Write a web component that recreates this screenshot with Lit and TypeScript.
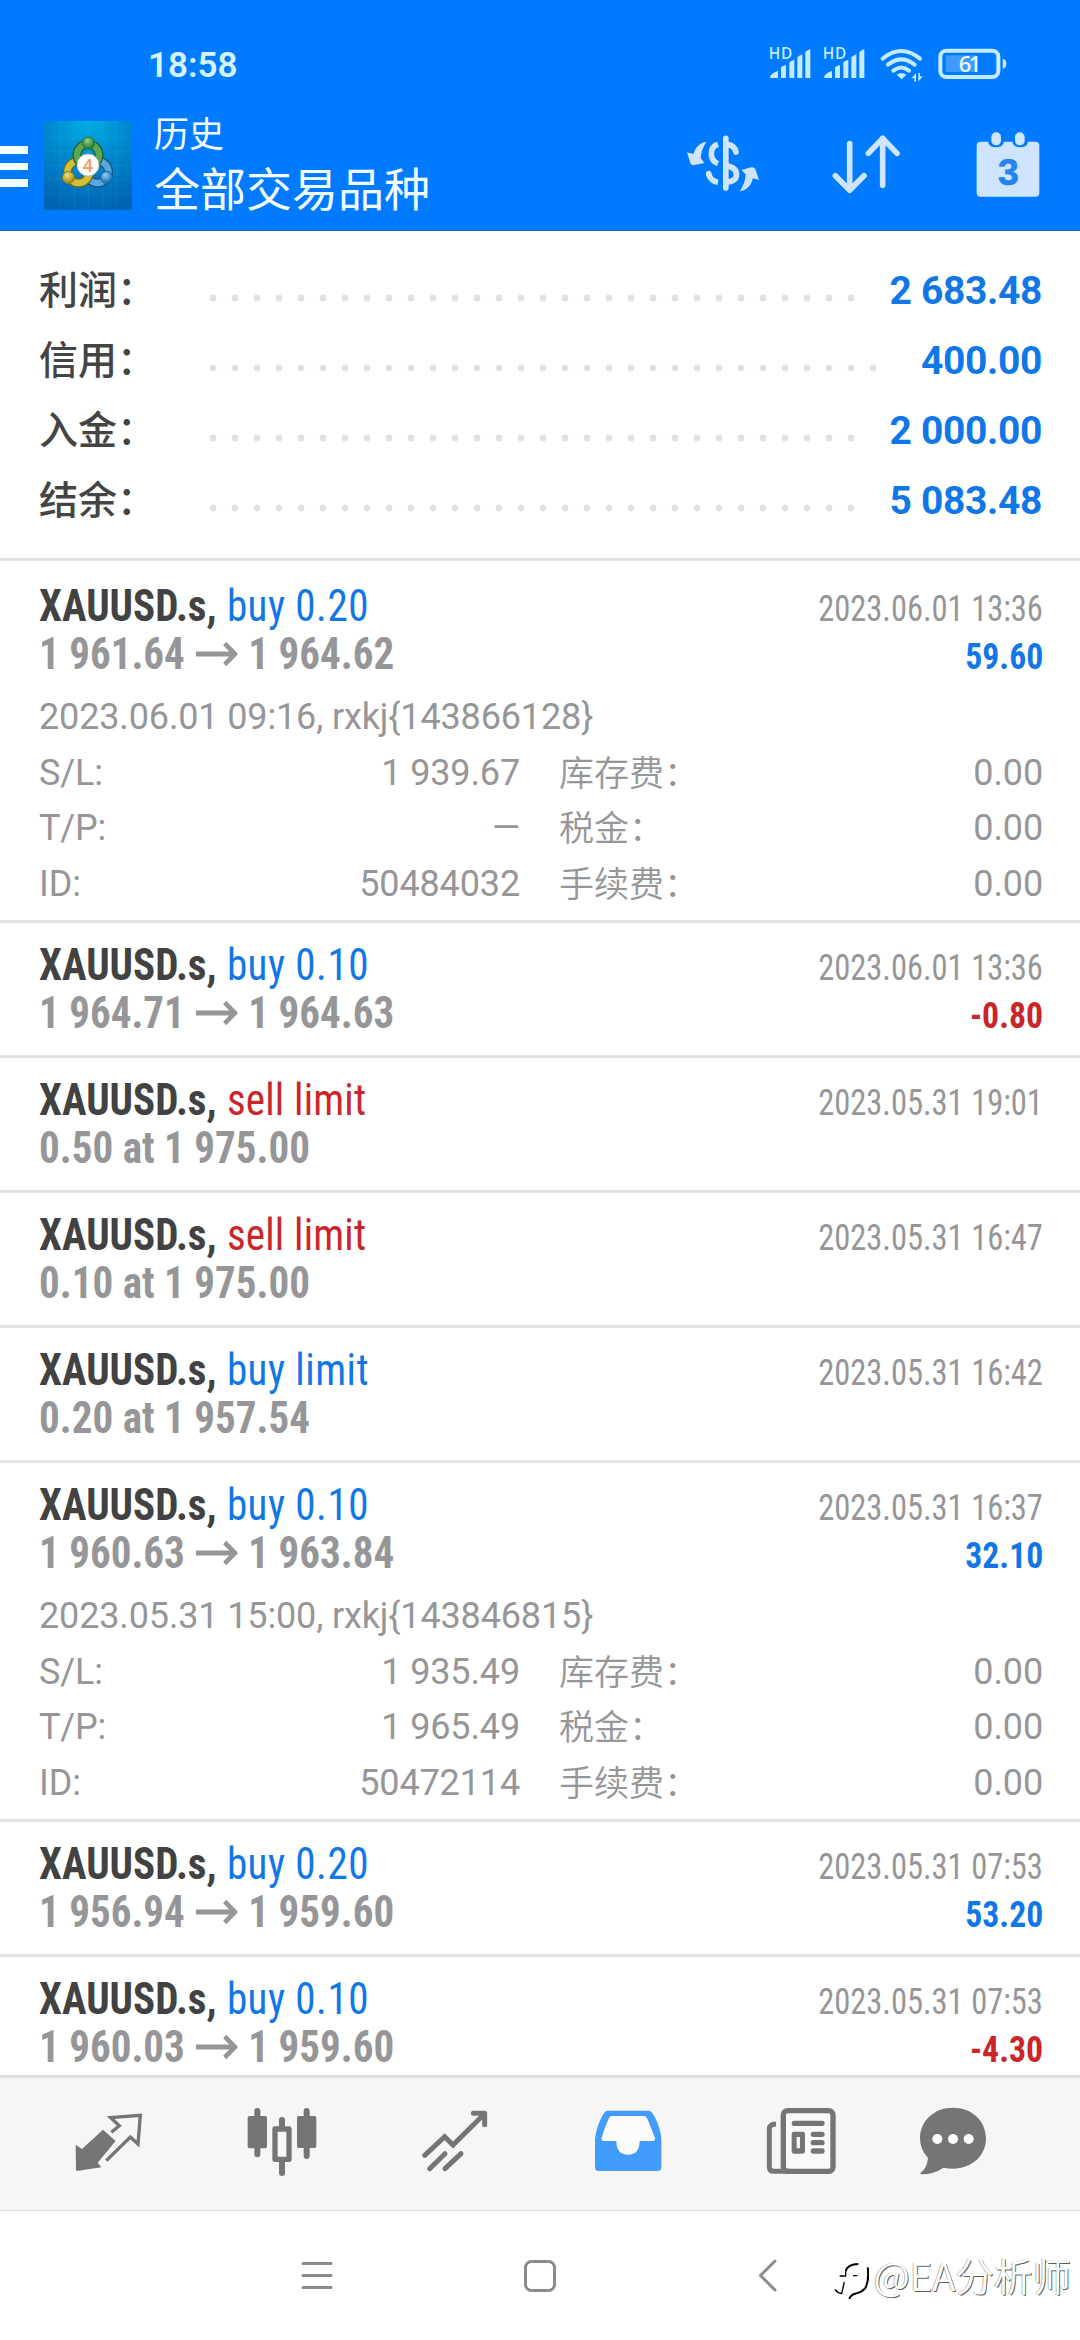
import { LitElement, html, css, svg, nothing } from "lit";
import { customElement, property } from "lit/decorators.js";

interface Detail {
  comment: string;
  sl: string;
  tp: string;
  id: string;
}
interface Deal {
  side: "buy" | "sell";
  action: string;
  from: string;
  to?: string;
  date: string;
  profit?: string;
  detail?: Detail;
}

const SUMMARY: [string, string][] = [
  ["利润：", "2 683.48"],
  ["信用：", "400.00"],
  ["入金：", "2 000.00"],
  ["结余：", "5 083.48"],
];

const DEALS: Deal[] = [
  { side: "buy", action: "buy 0.20", from: "1 961.64", to: "1 964.62", date: "2023.06.01 13:36", profit: "59.60",
    detail: { comment: "2023.06.01 09:16, rxkj{143866128}", sl: "1 939.67", tp: "—", id: "50484032" } },
  { side: "buy", action: "buy 0.10", from: "1 964.71", to: "1 964.63", date: "2023.06.01 13:36", profit: "-0.80" },
  { side: "sell", action: "sell limit", from: "0.50 at 1 975.00", date: "2023.05.31 19:01" },
  { side: "sell", action: "sell limit", from: "0.10 at 1 975.00", date: "2023.05.31 16:47" },
  { side: "buy", action: "buy limit", from: "0.20 at 1 957.54", date: "2023.05.31 16:42" },
  { side: "buy", action: "buy 0.10", from: "1 960.63", to: "1 963.84", date: "2023.05.31 16:37", profit: "32.10",
    detail: { comment: "2023.05.31 15:00, rxkj{143846815}", sl: "1 935.49", tp: "1 965.49", id: "50472114" } },
  { side: "buy", action: "buy 0.20", from: "1 956.94", to: "1 959.60", date: "2023.05.31 07:53", profit: "53.20" },
  { side: "buy", action: "buy 0.10", from: "1 960.03", to: "1 959.60", date: "2023.05.31 07:53", profit: "-4.30" },
];

const signal = (x: number) => svg`
  <g transform="translate(${x} 0)">
    <text x="385" y="117" font-size="46" font-weight="600" textLength="71">HD</text>
    <path d="M390 174v-7q8-10 23-15v22zM422 174v-32q4-5 15-7v39zM447 174v-47q4-5 15-8v55zM471 174v-62q4-5 15-9v71zM495 174v-77q4-6 15-10v87z"/>
  </g>`;

@customElement("app-header")
export class AppHeader extends LitElement {
  static styles = css`
    :host { display: block; box-sizing: border-box; height: 231px; background: #007aff; border-bottom: 1px solid #1f64ac; color: #f2feff; }
    .status { height: 100px; display: flex; justify-content: space-between; align-items: flex-start; padding: 35px 73px 0 148px; box-sizing: border-box; }
    .time { font: 600 35px/42px Roboto, sans-serif; color: #d6f4ff; padding-top: 10px; }
    .status svg { width: 240px; height: 49px; fill: #c4ebff; font-family: "Open Sans", sans-serif; }
    .bar { height: 130px; display: flex; align-items: center; }
    .menu { display: grid; gap: 9px; width: 28px; margin: 3px 16px 0 0; }
    .menu i { height: 7.6px; background: #f2feff; }
    .logo { width: 88px; height: 89px; flex: none; }
    .titles { flex: 1; padding-left: 22px; font-family: "Noto Sans CJK SC", sans-serif; font-weight: 370; }
    .small { font-size: 35px; line-height: 42px; }
    .large { font-size: 46px; line-height: 66px; }
    .act { height: 72px; flex: none; fill: #cfe5ff; stroke: #cfe5ff; }
    .a1 { width: 76px; margin-right: 69px; }
    .a2 { width: 72px; margin-right: 72px; }
    .a3 { width: 68px; margin-right: 38px; }
  `;
  render() {
    return html`
      <div class="status">
        <div class="time">18:58</div>
        <svg viewBox="380 45 720 147">
          ${signal(0)}${signal(162)}
          <g fill="none" stroke="#c4ebff" stroke-width="12" stroke-linecap="round">
            <path d="M727 116q55-46 112 0M743 134q40-32 80 0M759 152q24-19 47 0"/>
            <rect x="900" y="92" width="174" height="79" rx="18"/>
          </g>
          <path d="M769 164q14-10 29 0l-14 14zM827 159v26h-5v-10l-8 0zM834 185v-26h5v10l8 0z"/>
          <path d="M1087 117q11 0 11 14t-11 15z"/>
          <path d="M916 106h92v50h-92z" fill="#3f9cff"/>
          <text x="955" y="157" font-size="66" font-weight="600" textLength="68" fill="#e6f7ff">61</text>
        </svg>
      </div>
      <div class="bar">
        <div class="menu"><i></i><i></i><i></i></div>
        <svg class="logo" viewBox="0 0 88 89">
          <defs>
            <radialGradient id="bg" cx="50%" cy="0%" r="100%"><stop offset="0" stop-color="#00aee2"/><stop offset=".5" stop-color="#0086cc"/><stop offset="1" stop-color="#0064b4"/></radialGradient>
            <radialGradient id="gr" cx="40%" cy="30%" r="70%"><stop offset="0" stop-color="#8fd080"/><stop offset="1" stop-color="#1f7a32"/></radialGradient>
            <radialGradient id="ye" cx="40%" cy="30%" r="70%"><stop offset="0" stop-color="#f4e27c"/><stop offset="1" stop-color="#9a860c"/></radialGradient>
            <radialGradient id="bl" cx="40%" cy="30%" r="70%"><stop offset="0" stop-color="#8fd0f6"/><stop offset="1" stop-color="#0e66ae"/></radialGradient>
          </defs>
          <rect width="88" height="89" fill="url(#bg)"/>
          <path d="M0 16.500h88M0 30.500h88M0 44.500h88M0 58.500h88M0 72.500h88M16.500 0v89M30.500 0v89M44.500 0v89M58.500 0v89M72.500 0v89" stroke="#3cc0f0" stroke-opacity=".13"/>
          <g fill="none">
            <circle cx="53.500" cy="51" r="11" stroke="#17517c" stroke-width="9"/><circle cx="53.500" cy="51" r="11" stroke="#58a8dc" stroke-width="6.500"/>
            <circle cx="34.500" cy="51" r="11" stroke="#5c6d24" stroke-width="9"/><circle cx="34.500" cy="51" r="11" stroke="#d6bf38" stroke-width="6.500"/>
            <circle cx="44" cy="34" r="11" stroke="#225c38" stroke-width="9"/><circle cx="44" cy="34" r="11" stroke="#58a850" stroke-width="6.500"/>
          </g>
          <circle cx="44.500" cy="22" r="6" fill="url(#gr)" stroke="#236c35"/>
          <circle cx="24.500" cy="56.500" r="6" fill="url(#ye)" stroke="#8c7c18"/>
          <circle cx="62.500" cy="56.500" r="6" fill="url(#bl)" stroke="#16639c"/>
          <circle cx="44" cy="44" r="11" fill="#fff" stroke="#b8bfa0" stroke-width=".8"/>
          <text x="44" y="50.500" font-size="18" font-weight="600" text-anchor="middle" font-family="Open Sans, sans-serif" fill="#f29a5c">4</text>
        </svg>
        <div class="titles"><div class="small">历史</div><div class="large">全部交易品种</div></div>
        <svg class="act a1" viewBox="132 327 228 216">
          <g stroke="none">
            <path d="M196 366l-8 1q-22 8-31 35l-19-5 10 33q3 7 12 5l30-6-11-15q2-26 17-48z"/>
            <path d="M297 513l8-1q24-8 31-37l18 5-11-33q-3-6-12-5l-30 8 13 13q-1 26-17 50z"/>
          </g>
          <path fill="none" stroke-width="17" stroke-linecap="round" d="M254.500 355V504M262 374q18 3 23 22M262 438q28 8 24 30q-2 14-24 18"/>
          <path fill="none" stroke-width="17" d="M231 373q-20 6-20 28t20 30M231 487q-22-4-28-25"/>
          <circle cx="203" cy="461" r="8.500" stroke="none"/>
        </svg>
        <svg class="act a2" viewBox="567 327 216 216">
          <path fill="none" stroke-width="17" stroke-linecap="round" stroke-linejoin="round" d="M626 371V511M583 467L626 511L669 467M725 496V355M682 400L725 355L768 400"/>
        </svg>
        <svg class="act a3" viewBox="1002 325 204 216">
          <g stroke="none"><path d="M1022 363h23v4q5 13 23 13t23-13v-4h27v4q5 13 23 13t22-13v-4h23q12 0 12 12v141q0 12-12 12h-164q-12 0-12-12V375q0-12 12-12z"/>
          <rect x="1054" y="335" width="29" height="39" rx="14"/><rect x="1125" y="335" width="29" height="39" rx="14"/></g>
          <text x="1105" y="492" font-size="112" text-anchor="middle" fill="#2184f0" stroke="#2184f0" stroke-width="2" font-weight="700" font-family="Liberation Sans, sans-serif">3</text>
        </svg>
      </div>`;
  }
}

@customElement("account-summary")
export class AccountSummary extends LitElement {
  static styles = css`
    :host { display: block; box-sizing: border-box; height: 330px; padding: 24px 38px 0 39px; border-bottom: 3px solid #e3e3e3; }
    .row { display: flex; height: 70px; align-items: center; }
    .label { width: 163px; font: 500 39px/70px "Noto Sans CJK SC", sans-serif; color: #444; margin-top: -6px; }
    .dots { flex: 1; height: 8px; margin: 15px 30px 0 0; background: radial-gradient(circle at 11px 4px, #e1e1e1 3px, transparent 3.8px); background-repeat: repeat no-repeat; background-size: 22px 8px; }
    .value { font: 700 39px/70px Roboto, sans-serif; color: #1277e6; letter-spacing: -0.35px; margin-top: 2px; }
  `;
  render() {
    return html`${SUMMARY.map(([k, v]) => html`
      <div class="row"><span class="label">${k}</span><span class="dots"></span><span class="value">${v}</span></div>`)}`;
  }
}

@customElement("deal-item")
export class DealItem extends LitElement {
  @property({ attribute: false }) deal!: Deal;
  static styles = css`
    :host { display: block; flex: none; box-sizing: border-box; padding: 18px 37px 18px 39px; border-bottom: 3px solid #e3e3e3; color: #969698; font-family: "Roboto Condensed", Roboto, sans-serif; }
    :host([expanded]) { padding-bottom: 8px; }
    .line { display: flex; justify-content: space-between; align-items: baseline; height: 48px; line-height: 48px; white-space: nowrap; }
    .main { font-size: 44px; transform: scaleX(0.933); transform-origin: 0 50%; }
    .action { letter-spacing: 0.5px; margin-left: 1px; }
    .sell { letter-spacing: 0.2px; }
    .side { font-size: 36px; transform: scaleX(0.903); transform-origin: 100% 50%; }
    b.side { transform: scaleX(0.937); }
    b { font-weight: 700; }
    .symbol { color: #424242; }
    .blue { color: #1277e6; }
    .red { color: #c9252b; }
    .arrow { width: 45px; height: 24px; margin: 0 11.5px; fill: none; stroke: #969698; stroke-width: 4.8; vertical-align: 3px; }
    .detail { margin-top: 11px; font: 385 36px/55.5px Roboto, "Noto Sans CJK SC", sans-serif; letter-spacing: -0.14px; }
    .comment { line-height: 56px; }
    .grid { display: grid; grid-template-columns: 120px 361px 1fr auto; padding-top: 0.5px; }
    .r { text-align: right; }
    .cjk { font-size: 35px; padding-left: 39px; font-weight: 360; letter-spacing: 0; font-family: "Noto Sans CJK SC", sans-serif; margin-top: -3px; height: 58.5px; margin-bottom: -3px; }
  `;
  render() {
    const d = this.deal;
    const x = d.detail;
    return html`
      <div class="line">
        <span class="main"><b class="symbol">XAUUSD.s,</b> <span class="action ${d.side === "buy" ? "blue" : "sell red"}">${d.action}</span></span>
        <span class="side">${d.date}</span>
      </div>
      <div class="line">
        <b class="main">${d.from}${d.to
          ? html`<svg class="arrow" viewBox="0 0 45 24"><path d="M0 12H42M31 1.500L42 12L31 22.500"/></svg>${d.to}`
          : nothing}</b>
        ${d.profit ? html`<b class="side ${d.profit.startsWith("-") ? "red" : "blue"}">${d.profit}</b>` : nothing}
      </div>
      ${x ? html`<div class="detail">
        <div class="comment">${x.comment}</div>
        <div class="grid">
          <span>S/L:</span><span class="r">${x.sl}</span><span class="cjk">库存费：</span><span class="r">0.00</span>
          <span>T/P:</span><span class="r">${x.tp}</span><span class="cjk">税金：</span><span class="r">0.00</span>
          <span>ID:</span><span class="r">${x.id}</span><span class="cjk">手续费：</span><span class="r">0.00</span>
        </div>
      </div>` : nothing}`;
  }
}

@customElement("tab-bar")
export class TabBar extends LitElement {
  static styles = css`
    :host { display: flex; box-sizing: border-box; height: 136px; flex: none; background: #f6f6f6; border-top: 3px solid #dedede; border-bottom: 1px solid #dcdcdc; padding-left: 22px; }
    .tab { width: 173px; display: flex; align-items: center; justify-content: center; }
    .tab:last-child { width: 132px; }
    svg { width: 72px; height: 76px; fill: #757575; }
    .ln { fill: none; stroke: #757575; stroke-linecap: round; }
    .butt { stroke-linecap: butt; }
  `;
  render() {
    return html`
      <div class="tab"><svg viewBox="218 138 216 228">
        <path d="M308 209L346 243L292 308L303 322L230 333L227 330L226 254L245 267z"/>
        <path class="ln butt" stroke-width="10" d="M333 217L357 197L331 173L420 166L413 252L390 231L318 302"/>
      </svg></div>
      <div class="tab"><svg viewBox="735 138 216 228">
        <path class="ln" stroke-width="18" d="M769 153V283M917 153V288M843 180V205M843 300V339"/>
        <rect x="740" y="168" width="58" height="97" rx="6"/><rect x="888" y="168" width="58" height="96" rx="6"/>
        <rect x="822" y="207" width="42" height="91" fill="#f9f9f9" stroke="#757575" stroke-width="16" stroke-linejoin="round"/>
      </svg></div>
      <div class="tab"><svg viewBox="175 138 216 228">
        <path class="ln" stroke-width="15" d="M192 286L252 230L277 255L368 165M207 326L253 281M253 326L301 281"/>
        <path class="ln" stroke-width="15" stroke-linejoin="round" d="M338 160H372V194"/>
      </svg></div>
      <div class="tab"><svg viewBox="694 138 216 228">
        <path fill="#429cfb" d="M738 152H866Q874 154 882 170Q900 204 902 238V321Q902 333 890 333H714Q703 333 703 321V238Q706 202 726 166Q732 154 738 152z"/>
        <path fill="#fbfbfb" d="M752 168H851Q857 169 861 178L883 234Q884 243 876 243H837Q837 284 802 284T767 243H730Q721 243 723 234Q731 203 744 176Q747 169 752 168z"/>
      </svg></div>
      <div class="tab"><svg viewBox="135 138 216 228">
        <rect x="190" y="152" width="149" height="182" rx="13" fill="#fafafa" stroke="#757575" stroke-width="16"/>
        <path class="ln butt" stroke-width="15" d="M168 193Q148 192 148 207V321Q148 334 161 334H210"/>
        <path class="ln" stroke-width="16" d="M223 190H306M280 223H306M280 248H306M280 273H306"/>
        <path fill-rule="evenodd" d="M223 215h25q7 0 7 7v52q0 7-7 7h-25q-8 0-8-7v-52q0-7 8-7zM230 231v34h10v-34z"/>
      </svg></div>
      <div class="tab"><svg viewBox="591 138 216 228">
        <path d="M699 143C756 143 798 183 798 235S756 326 699 326Q684 326 670 323Q644 342 603 343Q599 341 602 338Q621 325 624 294Q600 268 600 235C600 183 642 143 699 143z"/>
        <g fill="#fff"><circle cx="652" cy="237" r="15"/><circle cx="699" cy="237" r="15"/><circle cx="746" cy="237" r="15"/></g>
      </svg></div>`;
  }
}

@customElement("app-root")
export class AppRoot extends LitElement {
  static styles = css`
    :host { display: flex; flex-direction: column; width: 1080px; height: 2340px; background: #fff; overflow: hidden; position: relative; }
    .list { flex: 1; min-height: 0; overflow: hidden; display: flex; flex-direction: column; padding-top: 3px; }
    .nav { height: 129px; flex: none; display: flex; align-items: center; padding-left: 299px; }
    .nav svg { width: 36px; height: 36px; fill: none; stroke: #8b8b8b; stroke-width: 3; stroke-linecap: round; stroke-linejoin: round; margin-right: 187px; }
    .nav svg:nth-child(2) { margin-right: 191px; }
    .mark { position: absolute; right: 9px; bottom: 36px; display: flex; align-items: center; gap: 5px; color: #fff; font: 350 38.5px/60px "Noto Sans CJK SC", sans-serif; text-shadow: -1px 0 0 rgba(0, 0, 0, 0.3), 1px 1px 0 rgba(0, 0, 0, 0.65); white-space: nowrap; }
    .mark svg { width: 36px; height: 40px; fill: none; stroke: #000; margin-top: 14px; }
  `;
  render() {
    return html`
      <app-header></app-header>
      <account-summary></account-summary>
      <div class="list">${DEALS.map((d) => html`<deal-item .deal=${d} ?expanded=${!!d.detail}></deal-item>`)}</div>
      <tab-bar></tab-bar>
      <div class="nav">
        <svg viewBox="0 0 36 36"><path d="M4 5.500H32M4 17.500H32M4 29.500H32"/></svg>
        <svg viewBox="0 0 36 36"><rect x="3.500" y="3.500" width="29" height="29" rx="6"/></svg>
        <svg viewBox="0 0 36 36"><path d="M26 3L11.500 17.500L26 32"/></svg>
      </div>
      <div class="mark">
        <svg viewBox="92 105 108 120">
          <path stroke-width="6" d="M130 136Q136 114 168 114M196 124Q201 160 190 185Q178 200 158 203Q144 207 141 219"/>
          <path stroke-width="4" d="M112 150H130V136M98 190Q104 200 118 203L126 168M152 149H165"/>
        </svg>
        <span>@EA分析师</span>
      </div>`;
  }
}
